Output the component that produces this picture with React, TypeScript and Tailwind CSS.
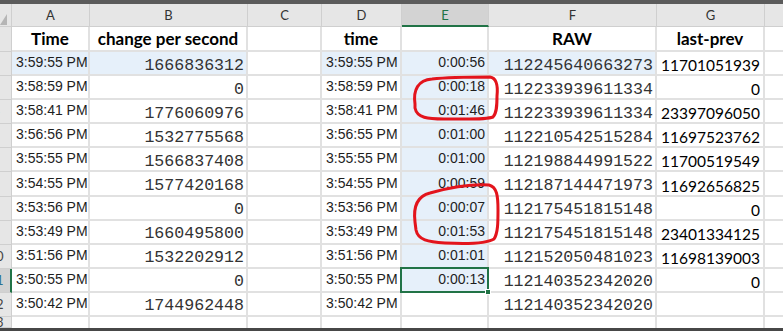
import React from "react";

const GRID = "border-r-2 border-b-2 border-[#e1e1e1] shrink-0";
const BLUE = "bg-[#e6f0fa]";
const TIME =
  "flex items-center pb-[2px] pl-[4px] font-['Liberation_Sans',Arial,sans-serif] text-[14px] leading-[14px] text-[#1e1e1e] whitespace-nowrap";
const ETIME =
  "flex items-center justify-end pb-[2px] pr-[2px] font-['Liberation_Sans',Arial,sans-serif] text-[14px] leading-[14px] text-[#1e1e1e] whitespace-nowrap";
const MONO =
  "flex items-end justify-end pr-[2px] font-['Liberation_Mono',monospace] text-[16.6px] leading-[16.6px] text-[#333] whitespace-nowrap";
const CAL =
  "flex items-end justify-end pb-[0.5px] pr-[3px] font-['Lato',sans-serif] text-[15.5px] leading-[15.5px] text-black whitespace-nowrap";
const HEAD =
  "flex items-end justify-center pb-[3px] font-['Lato',sans-serif] font-bold text-[17px] leading-[17px] text-black whitespace-nowrap";

const rows = [
  { a: "3:59:55 PM", b: "1666836312", d: "3:59:55 PM", e: "0:00:56", f: "112245640663273", g: "11701051939" },
  { a: "3:58:59 PM", b: "0", d: "3:58:59 PM", e: "0:00:18", f: "112233939611334", g: "0" },
  { a: "3:58:41 PM", b: "1776060976", d: "3:58:41 PM", e: "0:01:46", f: "112233939611334", g: "23397096050" },
  { a: "3:56:56 PM", b: "1532775568", d: "3:56:55 PM", e: "0:01:00", f: "112210542515284", g: "11697523762" },
  { a: "3:55:55 PM", b: "1566837408", d: "3:55:55 PM", e: "0:01:00", f: "112198844991522", g: "11700519549" },
  { a: "3:54:55 PM", b: "1577420168", d: "3:54:55 PM", e: "0:00:59", f: "112187144471973", g: "11692656825" },
  { a: "3:53:56 PM", b: "0", d: "3:53:56 PM", e: "0:00:07", f: "112175451815148", g: "0" },
  { a: "3:53:49 PM", b: "1660495800", d: "3:53:49 PM", e: "0:01:53", f: "112175451815148", g: "23401334125" },
  { a: "3:51:56 PM", b: "1532202912", d: "3:51:56 PM", e: "0:01:01", f: "112152050481023", g: "11698139003" },
  { a: "3:50:55 PM", b: "0", d: "3:50:55 PM", e: "0:00:13", f: "112140352342020", g: "0" },
  { a: "3:50:42 PM", b: "1744962448", d: "3:50:42 PM", e: "", f: "112140352342020", g: "" },
];

// row number column is scrolled so only the right edge of the digits shows
const RowHead = ({ n, sel }: { n: number; sel?: boolean }) => (
  <div
    className={
      sel
        ? "w-[12px] shrink-0 overflow-hidden flex items-center bg-[#d2d2d2] border-b border-[#cfcfcf] border-r-2 border-r-[#217346]"
        : "w-[12px] shrink-0 overflow-hidden flex items-center bg-[#e6e6e6] border-b border-r border-[#cfcfcf]"
    }
  >
    <div
      className={`ml-[-26px] w-[44px] shrink-0 text-center font-['Lato',sans-serif] text-[13px] leading-[13px] ${
        sel ? "text-[#2a6f8f]" : "text-[#444]"
      }`}
    >
      {n}
    </div>
  </div>
);

const ColHead = ({ w, label, sel }: { w: string; label: string; sel?: boolean }) => (
  <div
    className={
      sel
        ? `${w} shrink-0 flex items-center justify-center pt-[1px] bg-[#d3d3d3] border-r border-r-[#cfcfcf] border-b-2 border-b-[#217346] text-[#217346]`
        : `${w} shrink-0 flex items-center justify-center pt-[1px] border-r border-b border-[#cfcfcf]`
    }
  >
    {label}
  </div>
);

export default function App() {
  return (
    <div className="relative w-[783px] h-[331px] overflow-hidden bg-white flex flex-col">
      <div className="h-[4px] shrink-0 bg-[#5b5b5b]" />

      {/* column letters */}
      <div className="flex h-[23px] shrink-0 bg-[#e6e6e6] font-['Lato',sans-serif] text-[13px] leading-[13px] text-[#333]">
        <div className="w-[12px] shrink-0 relative border-r border-b border-[#cfcfcf]">
          <svg width="12" height="22" className="absolute left-0 top-0">
            <polygon points="0,21 7,21 7,10" fill="#b5b5b5" />
          </svg>
        </div>
        <ColHead w="w-[78px]" label="A" />
        <ColHead w="w-[158px]" label="B" />
        <ColHead w="w-[74px]" label="C" />
        <ColHead w="w-[80px]" label="D" />
        <ColHead w="w-[87px]" label="E" sel />
        <ColHead w="w-[168px]" label="F" />
        <ColHead w="w-[108px]" label="G" />
        <div className="flex-1 border-b border-[#cfcfcf]" />
      </div>

      {/* row 1: headings */}
      <div className="flex h-[25px] shrink-0">
        <RowHead n={1} />
        <div className={`w-[78px] ${GRID} ${HEAD}`}>Time</div>
        <div className={`w-[158px] ${GRID} ${HEAD}`}>change per second</div>
        <div className={`w-[74px] ${GRID}`} />
        <div className={`w-[80px] ${GRID} ${HEAD}`}>time</div>
        <div className={`w-[87px] ${GRID}`} />
        <div className={`w-[168px] ${GRID} ${HEAD}`}>RAW</div>
        <div className={`w-[108px] ${GRID} ${HEAD}`}>last-prev</div>
        <div className="flex-1 border-b-2 border-[#e1e1e1]" />
      </div>

      {rows.map((r, i) => {
        const n = i + 2;
        const first = n === 2;
        const eBlue = n <= 11;
        return (
          <div key={n} className="flex h-[24.1px] shrink-0">
            <RowHead n={n} sel={n === 11} />
            <div className={`w-[78px] ${GRID} ${first ? BLUE : ""} ${TIME}`}>{r.a}</div>
            <div className={`w-[158px] ${GRID} ${first ? BLUE : ""} ${MONO}`}>{r.b}</div>
            <div className={`w-[74px] ${GRID}`} />
            <div className={`w-[80px] ${GRID} ${first ? BLUE : ""} ${TIME}`}>{r.d}</div>
            <div className={`relative w-[87px] ${GRID} ${eBlue ? BLUE : ""} ${ETIME}`}>
              {r.e}
              {n === 11 && (
                <div className="absolute -left-[2px] -top-[2px] -right-[2px] -bottom-[2px] z-10 border-2 border-[#217346]">
                  <div className="absolute -right-[4px] -bottom-[4px] w-[6px] h-[6px] bg-[#217346] border border-white" />
                </div>
              )}
            </div>
            <div className={`w-[168px] ${GRID} ${first ? BLUE : ""} ${MONO}`}>{r.f}</div>
            <div className={`w-[108px] ${GRID} ${CAL}`}>{r.g}</div>
            <div className="flex-1 border-b-2 border-[#e1e1e1]" />
          </div>
        );
      })}

      {/* row 13, cut off */}
      <div className="flex flex-1 min-h-0">
        <RowHead n={13} />
        <div className="w-[78px] shrink-0 border-r-2 border-[#e1e1e1]" />
        <div className="w-[158px] shrink-0 border-r-2 border-[#e1e1e1]" />
        <div className="w-[74px] shrink-0 border-r-2 border-[#e1e1e1]" />
        <div className="w-[80px] shrink-0 border-r-2 border-[#e1e1e1]" />
        <div className="w-[87px] shrink-0 border-r-2 border-[#e1e1e1]" />
        <div className="w-[168px] shrink-0 border-r-2 border-[#e1e1e1]" />
        <div className="w-[108px] shrink-0 border-r-2 border-[#e1e1e1]" />
        <div className="flex-1" />
      </div>

      <div className="h-[3px] shrink-0 bg-[#474747]" />

      {/* red pen marks drawn over the sheet */}
      <svg
        width="783"
        height="331"
        className="absolute left-0 top-0 pointer-events-none z-20"
        fill="none"
        stroke="#e3141c"
        strokeWidth="3"
        strokeLinecap="round"
      >
        <path d="M415 104 C413 90 418 80 432 79 C450 77 475 77 490 77 C497 78 498 86 497 96 C497 104 497 113 493 117 C486 120 465 119 444 119 C428 119 417 118 415 108 Z" />
        <path d="M415 222 C413 206 418 196 430 193 C448 188 470 184 489 185 C497 187 498 196 498 210 C498 222 498 233 494 239 C486 244 465 244 445 243 C428 242 418 240 416 230 Z" />
      </svg>
    </div>
  );
}
